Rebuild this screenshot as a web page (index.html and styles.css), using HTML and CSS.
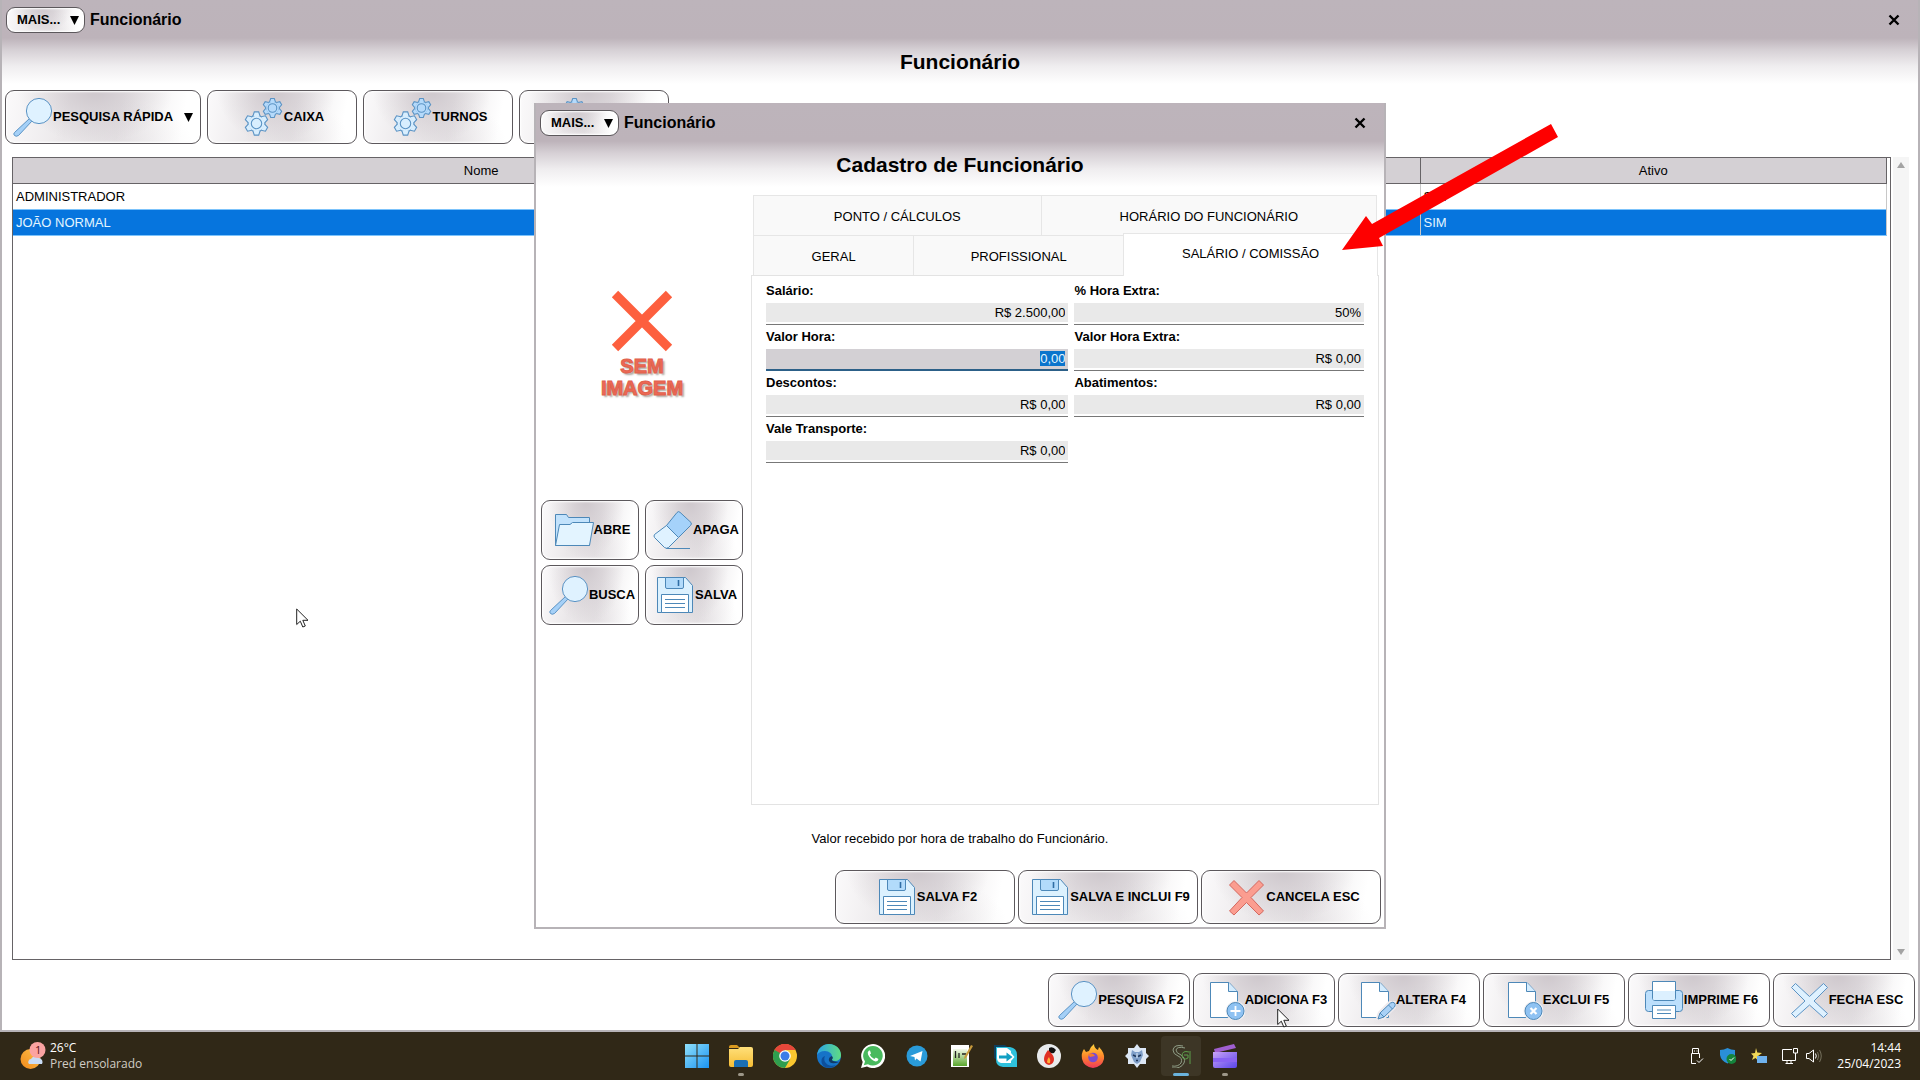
FILE: index.html
```html
<!DOCTYPE html>
<html lang="pt-BR">
<head>
<meta charset="utf-8">
<title>Funcionário</title>
<link rel="stylesheet" href="styles.css">
</head>
<body>
<svg class="sprite" aria-hidden="true">
  <defs>
    <linearGradient id="g-win" x1="0" y1="0" x2="1" y2="1"><stop offset="0" stop-color="#8fe0fb"/><stop offset="1" stop-color="#1b93f0"/></linearGradient>
    <linearGradient id="g-folder" x1="0" y1="0" x2="0" y2="1"><stop offset="0" stop-color="#ffe07a"/><stop offset="1" stop-color="#f5bd35"/></linearGradient>
    <linearGradient id="g-edge" x1="0" y1="0" x2="1" y2="0"><stop offset="0" stop-color="#2ba4e6"/><stop offset="1" stop-color="#5fdc82"/></linearGradient>
    <linearGradient id="g-fox" x1="0" y1="0" x2="0" y2="1"><stop offset="0" stop-color="#ffd43c"/><stop offset="0.5" stop-color="#ff8a2a"/><stop offset="1" stop-color="#f0385a"/></linearGradient>
    <linearGradient id="g-note" x1="0" y1="0" x2="0" y2="1"><stop offset="0" stop-color="#f4f9ea"/><stop offset="1" stop-color="#5aa62c"/></linearGradient>
    <linearGradient id="g-clip" x1="0" y1="0" x2="1" y2="1"><stop offset="0" stop-color="#c9a2f5"/><stop offset="1" stop-color="#5a45ec"/></linearGradient>
    <linearGradient id="g-sun" x1="1" y1="0" x2="0" y2="1"><stop offset="0" stop-color="#ffc24a"/><stop offset="1" stop-color="#f08a1c"/></linearGradient>
    <g id="tooth"><path d="M-3.6-7.4L-2.2-11.6H2.2L3.6-7.4"/></g>
    <g id="gear">
      <circle r="8.4"/>
      <use href="#tooth"/><use href="#tooth" transform="rotate(60)"/><use href="#tooth" transform="rotate(120)"/>
      <use href="#tooth" transform="rotate(180)"/><use href="#tooth" transform="rotate(240)"/><use href="#tooth" transform="rotate(300)"/>
      <circle r="5.2"/>
    </g>
  </defs>
  <symbol id="i-search" viewBox="0 0 40 40">
    <path d="M16.5 21.5L19 24 5.5 38.5Q3 40 1.5 38.500T1.5 35.500Z" fill="#a5d0f7" stroke="#5b93c4"/>
    <circle cx="26" cy="14" r="12.600" fill="#dff2ff" stroke="#5b93c4"/>
  </symbol>
  <symbol id="i-gears" viewBox="0 0 40 40">
    <g fill="#d8eefe" stroke="#5b93c4" stroke-width="1.100"><use href="#gear" transform="translate(12.500 26.500)"/></g>
    <g fill="#b5dafb" stroke="#5b93c4" stroke-width="1.300"><use href="#gear" transform="translate(28.500 11) scale(.82)"/></g>
  </symbol>
  <symbol id="i-folder" viewBox="0 0 40 40">
    <path d="M1.500 35.500V4.500H12.500L14.500 7.500H35.500V35.500Z" fill="#c2e2fc" stroke="#4d88b8"/>
    <path d="M1.500 35.500L5.500 14.500H16L18.500 12.500H39.500L35.500 35.500Z" fill="#e3f4ff" stroke="#4d88b8"/>
  </symbol>
  <symbol id="i-eraser" viewBox="0 0 40 40">
    <path d="M13 38.500H37" stroke="#4d88b8" fill="none"/>
    <path d="M13.500 15.500L24 2.500Q25.500 .8 27 2.300L38 12.500Q39 14 37.500 15.500L25.500 27.500Z" fill="#a5d2fa" stroke="#4d88b8"/>
    <path d="M13.500 15.500L25.500 27.500 15.500 37.500Q13.500 39 11.500 37.500L1.500 27.500Q.5 26 1.500 24.500Z" fill="#dff2ff" stroke="#4d88b8"/>
  </symbol>
  <symbol id="i-floppy" viewBox="0 0 40 40">
    <path d="M2.500 2.500H30.500L37.500 10.500V37.500H2.500Z" fill="#dcf1fe" stroke="#4d88b8"/>
    <path d="M10.500 2.500V12Q10.500 13.500 12 13.500H27Q28.500 13.500 28.500 12V2.500Z" fill="#b2dbfb" stroke="#4d88b8"/>
    <path d="M23.500 5V11" stroke="#2f6ea5" stroke-width="1.600"/>
    <path d="M6.500 37.500V19.500H33.500V37.500Z" fill="#fff" stroke="#4d88b8"/>
    <path d="M10 24.500H30M10 28.500H30M10 32.500H30" stroke="#4d88b8"/>
  </symbol>
  <symbol id="i-add" viewBox="0 0 40 40">
    <path d="M5.500 2.500H24L32.500 11.500V37.500H5.500Z" fill="#fff" stroke="#4d88b8"/><path d="M23.500 2.500V11.500H32.500" fill="#d5ecfd" stroke="#4d88b8"/>
    <circle cx="30.500" cy="31" r="10" fill="#f3f1f3"/><circle cx="30.500" cy="31" r="8.500" fill="#8fc2f2" stroke="#4d88b8"/>
    <path d="M30.500 26V36M25.500 31H35.500" stroke="#fff" stroke-width="1.800"/>
  </symbol>
  <symbol id="i-edit" viewBox="0 0 40 40">
    <path d="M5.500 2.500H24L32.500 11.500V37.500H5.500Z" fill="#fff" stroke="#4d88b8"/><path d="M23.500 2.500V11.500H32.500" fill="#d5ecfd" stroke="#4d88b8"/>
    <path d="M19 41L22 32 33 21H41V27L28 40Z" fill="#edeaed"/>
    <path d="M22 39L24 33 34.500 23Q37 21.500 38.500 23T38.500 27L28 37Z" fill="#a9d1f6" stroke="#4d88b8"/><path d="M32.500 25L36.500 29M24 33L28 37" stroke="#4d88b8"/>
  </symbol>
  <symbol id="i-delete" viewBox="0 0 40 40">
    <path d="M5.500 2.500H24L32.500 11.500V37.500H5.500Z" fill="#fff" stroke="#4d88b8"/><path d="M23.500 2.500V11.500H32.500" fill="#d5ecfd" stroke="#4d88b8"/>
    <circle cx="30.500" cy="31" r="10" fill="#f3f1f3"/><circle cx="30.500" cy="31" r="8.500" fill="#8fc2f2" stroke="#4d88b8"/>
    <path d="M27.500 28L33.500 34M33.500 28L27.500 34" stroke="#fff" stroke-width="2.200"/>
  </symbol>
  <symbol id="i-print" viewBox="0 0 40 40">
    <rect x="1.500" y="10.500" width="37" height="21" rx="3" fill="#bcdffc" stroke="#4d88b8"/>
    <path d="M8.500 1.500H31.500V18Q31.500 20.500 29 20.500H11Q8.500 20.500 8.500 18Z" fill="#fff" stroke="#4d88b8"/>
    <path d="M9 11H31V18.500Q31 20 29.500 20H10.500Q9 20 9 18.500Z" fill="#dcf0ff"/>
    <path d="M8.500 25.500H31.500V38.500H8.500Z" fill="#fff" stroke="#4d88b8"/><path d="M13 30H27M13 33.500H27" stroke="#4d88b8"/>
  </symbol>
  <symbol id="i-close" viewBox="0 0 40 40">
    <path d="M6.500 3.500L20.500 16.500 34.500 3.500 38.500 7.500 25 21 38.500 33.500 34.500 37.500 20.500 25 6.500 37.500 2.500 33.500 16 21 2.500 7.500Z" fill="#def1ff" stroke="#5b93c4" stroke-linejoin="round"/>
  </symbol>
  <symbol id="i-cancel" viewBox="0 0 40 40">
    <path d="M8 3.500L20.500 16 33 3.500 37.500 8 25 20.500 37.500 34 33 38 20.500 25.500 8 38 3.500 34 16 20.500 3.500 8Z" fill="#fb9d90" stroke="#d4685f" stroke-linejoin="round"/>
  </symbol>
  <symbol id="i-caret" viewBox="0 0 9 9"><path d="M0 0H9L4.500 9Z" fill="#000"/></symbol>
  <symbol id="i-x" viewBox="0 0 12 12"><path d="M1.500 1.500L10.500 10.500M10.500 1.500L1.500 10.500" stroke="#000" stroke-width="2.400"/></symbol>
  <symbol id="i-pointer" viewBox="0 0 13 20"><path d="M.7 1V16.500L4.300 13.200 6.800 19 9.300 18 6.800 12.300H12Z" fill="#fff" stroke="#222"/></symbol>
</svg>

<main class="desktop">
  <section class="window main-window">
    <header class="titlebar">
      <button class="btn more" type="button">MAIS...<svg class="caret"><use href="#i-caret"/></svg></button>
      <span class="caption">Funcionário</span>
      <button class="close" type="button" aria-label="Fechar"><svg><use href="#i-x"/></svg></button>
    </header>
    <h1 class="heading">Funcionário</h1>
    <div class="toolbar">
      <button class="btn quick" type="button"><svg class="icon"><use href="#i-search"/></svg>PESQUISA RÁPIDA<svg class="caret"><use href="#i-caret"/></svg></button>
      <button class="btn" type="button"><svg class="icon"><use href="#i-gears"/></svg>CAIXA</button>
      <button class="btn" type="button"><svg class="icon"><use href="#i-gears"/></svg>TURNOS</button>
      <button class="btn options" type="button" aria-label="Opções"><svg class="icon"><use href="#i-gears"/></svg></button>
    </div>
    <div class="list">
      <div class="list-body">
        <table>
          <thead><tr><th class="col-name">Nome</th><th></th><th class="col-active">Ativo</th></tr></thead>
          <tbody>
            <tr><td>ADMINISTRADOR</td><td></td><td>SIM</td></tr>
            <tr class="selected"><td>JOÃO NORMAL</td><td></td><td>SIM</td></tr>
          </tbody>
        </table>
      </div>
      <div class="scrollbar"><span class="up"></span><span class="down"></span></div>
    </div>
    <footer class="actions">
      <button class="btn" type="button"><svg class="icon"><use href="#i-search"/></svg>PESQUISA F2</button>
      <button class="btn" type="button"><svg class="icon"><use href="#i-add"/></svg>ADICIONA F3</button>
      <button class="btn" type="button"><svg class="icon"><use href="#i-edit"/></svg>ALTERA F4</button>
      <button class="btn" type="button"><svg class="icon"><use href="#i-delete"/></svg>EXCLUI F5</button>
      <button class="btn" type="button"><svg class="icon"><use href="#i-print"/></svg>IMPRIME F6</button>
      <button class="btn" type="button"><svg class="icon"><use href="#i-close"/></svg>FECHA ESC</button>
    </footer>
  </section>

  <div class="overlay">
    <section class="window dialog" role="dialog" aria-labelledby="dialog-title">
      <header class="titlebar">
        <button class="btn more" type="button">MAIS...<svg class="caret"><use href="#i-caret"/></svg></button>
        <span class="caption">Funcionário</span>
        <button class="close" type="button" aria-label="Fechar"><svg><use href="#i-x"/></svg></button>
      </header>
      <h2 class="heading" id="dialog-title">Cadastro de Funcionário</h2>
      <div class="dialog-body">
        <aside class="side">
          <div class="photo">
            <svg viewBox="0 0 62 62"><path d="M4 4L58 58M58 4L4 58" stroke="#fd5f3e" stroke-width="9"/></svg>
            <span>SEM<br>IMAGEM</span>
          </div>
          <div class="photo-buttons">
            <button class="btn" type="button"><svg class="icon"><use href="#i-folder"/></svg>ABRE</button>
            <button class="btn" type="button"><svg class="icon"><use href="#i-eraser"/></svg>APAGA</button>
            <button class="btn" type="button"><svg class="icon"><use href="#i-search"/></svg>BUSCA</button>
            <button class="btn" type="button"><svg class="icon"><use href="#i-floppy"/></svg>SALVA</button>
          </div>
        </aside>
        <div class="panel">
          <div class="tabs" role="tablist">
            <div class="tab-row">
              <button class="tab w-ponto" type="button" role="tab">PONTO / CÁLCULOS</button>
              <button class="tab w-horario" type="button" role="tab">HORÁRIO DO FUNCIONÁRIO</button>
            </div>
            <div class="tab-row">
              <button class="tab w-geral" type="button" role="tab">GERAL</button>
              <button class="tab w-prof" type="button" role="tab">PROFISSIONAL</button>
              <button class="tab w-salario active" type="button" role="tab" aria-selected="true">SALÁRIO / COMISSÃO</button>
            </div>
          </div>
          <form class="page">
            <div class="field"><label for="salario">Salário:</label><input id="salario" type="text" value="R$ 2.500,00"></div>
            <div class="field"><label for="hora-extra">% Hora Extra:</label><input id="hora-extra" type="text" value="50%"></div>
            <div class="field"><label for="valor-hora">Valor Hora:</label><input id="valor-hora" type="text" value="0,00"></div>
            <div class="field"><label for="valor-extra">Valor Hora Extra:</label><input id="valor-extra" type="text" value="R$ 0,00"></div>
            <div class="field"><label for="descontos">Descontos:</label><input id="descontos" type="text" value="R$ 0,00"></div>
            <div class="field"><label for="abatimentos">Abatimentos:</label><input id="abatimentos" type="text" value="R$ 0,00"></div>
            <div class="field"><label for="vale">Vale Transporte:</label><input id="vale" type="text" value="R$ 0,00"></div>
          </form>
        </div>
      </div>
      <p class="hint">Valor recebido por hora de trabalho do Funcionário.</p>
      <footer class="actions dialog-actions">
        <button class="btn" type="button"><svg class="icon"><use href="#i-floppy"/></svg>SALVA F2</button>
        <button class="btn" type="button"><svg class="icon"><use href="#i-floppy"/></svg>SALVA E INCLUI F9</button>
        <button class="btn" type="button"><svg class="icon"><use href="#i-cancel"/></svg>CANCELA ESC</button>
      </footer>
      <svg class="arrow" viewBox="0 0 216 126"><path d="M209 0L216 13 37 114 41 122 0 126 24 92 30 100Z" fill="#fe0000"/></svg>
    </section>
  </div>
  <svg class="pointer pointer-list"><use href="#i-pointer"/></svg>
  <svg class="pointer pointer-add"><use href="#i-pointer"/></svg>
</main>

<footer class="taskbar">
  <div class="weather">
    <svg viewBox="0 0 26 28"><circle cx="10.500" cy="17" r="10" fill="url(#g-sun)"/><path d="M9 22a3 3 0 0 1 2-5 5 5 0 0 1 8-1 4 4 0 0 1 3 6Z" fill="#c9dcf5"/><circle cx="17.500" cy="8" r="8" fill="#fba3a1"/><text x="15" y="12" font-size="11" fill="#5b1010">1</text></svg>
    <div><div>26°C</div><div class="dim">Pred ensolarado</div></div>
  </div>
  <nav class="apps">
    <span class="app"><svg viewBox="0 0 24 24"><path d="M0 0H11.500V11.500H0ZM12.500 0H24V11.500H12.500ZM0 12.500H11.500V24H0ZM12.500 12.500H24V24H12.500Z" fill="url(#g-win)"/></svg></span>
    <span class="app running"><svg viewBox="0 0 24 24"><path d="M0 3Q0 1 2 1H8L11 4H0Z" fill="#d99a20"/><path d="M0 5H9L11 3H22Q24 3 24 5V21Q24 23 22 23H2Q0 23 0 21Z" fill="url(#g-folder)"/><path d="M5 23V18Q5 16 7 16H17Q19 16 19 18V23Z" fill="#1a6fb5"/></svg></span>
    <span class="app"><svg viewBox="0 0 24 24"><circle cx="12" cy="12" r="12" fill="#fbc72f"/><path d="M12 12L1.600 6A12 12 0 0 1 22.400 6H12Z" fill="#e5473a"/><path d="M1.600 6A12 12 0 0 0 12 24L17.200 15 12 12Z" fill="#2f9e4f"/><path d="M1.600 6L6.800 15 12 12 12 6Z" fill="#2f9e4f"/><path d="M1.600 6A12 12 0 0 1 22.400 6H12L7 9Z" fill="#e5473a"/><circle cx="12" cy="12" r="5.800" fill="#fff"/><circle cx="12" cy="12" r="4.500" fill="#3b7de8"/></svg></span>
    <span class="app"><svg viewBox="0 0 24 24"><circle cx="12" cy="12" r="12" fill="#1673c8"/><path d="M0 11C1 4 6 0 12 0 19 0 24 5 24 11 24 15 21 17 18 17 15 17 14 16 15 14 16 10 12 7 8 7 4 7 1 9 0 11Z" fill="url(#g-edge)"/><path d="M8 12C5 18 12 24 19 21 16 24 11 24.500 7 22.500 3 19 4 13 8 12Z" fill="#0d4f9c"/><path d="M15 12a4 4 0 0 0-3 5q2 4 10 1-3 0-6-1-2-1 0-3z" fill="#103a66"/></svg></span>
    <span class="app"><svg viewBox="0 0 24 24"><path d="M0 24L1.700 18A12 12 0 1 1 6 22.400Z" fill="#fff"/><path d="M2.800 21.200L4 17.500A9.800 9.800 0 1 1 7 20.200Z" fill="#49ba5e"/><path d="M8 6.500Q6 8 7 10.500 9.500 16 14.500 17.500 17 17.500 17.500 15L14.800 13.500 13.300 15Q10 13.500 8.800 10.800L10 9.500 9 6.500Z" fill="#fff"/></svg></span>
    <span class="app"><svg viewBox="0 0 24 24"><circle cx="12" cy="12" r="10.500" fill="#2a9bd9"/><path d="M5 12L17.500 7 15.500 17.500 11.500 14.500 10 16.500 9.500 13Z" fill="#fff"/></svg></span>
    <span class="app"><svg viewBox="0 0 24 24"><path d="M2 1H20V23H2Z" fill="#fff"/><path d="M4 5H18V22H4Z" fill="url(#g-note)"/><path d="M6.500 7V14M10 9V14M13 10H17" stroke="#222" stroke-width="1.300"/><path d="M22 1L24 2 17 14 15 15 15.500 12.500Z" fill="#c79a3c"/></svg></span>
    <span class="app"><svg viewBox="0 0 24 24"><path d="M1 1H12L16 4H6V18L1 14Z" fill="#0e3f5c"/><path d="M3 3H17Q24 4 24 11V23H10Q3 22 3 16Z" fill="#2fc2dd"/><path d="M4 4H14L18 7V9L21.500 13 18 17V19H8Q4 18 4 14Z" fill="#fff"/><path d="M6 11.500H13.500V8.500L19.500 13 13.500 17.500V14.500H6Z" fill="#12a0c4"/></svg></span>
    <span class="app"><svg viewBox="0 0 24 24"><circle cx="12" cy="12" r="12" fill="#e8eaec"/><path d="M12 4Q16 2 19 6L17 9Q14 10 12 8Z" fill="#111"/><path d="M11 6Q17 11 17 15 17 20 12 21 7 20 7 15 7 11 11 6Z" fill="#e03024"/><path d="M12 13Q14 16 13 19 11 20 10 18 10 15 12 13Z" fill="#ffb03a"/></svg></span>
    <span class="app"><svg viewBox="0 0 24 24"><path d="M3 5L5 8 8 7Q9 3 13 0 13 4 17 6L18 3Q24 9 23 15 21 23 12 24 3 23 1 15 0 9 3 5Z" fill="url(#g-fox)"/><circle cx="12" cy="13.500" r="4.800" fill="#7a4bd0"/><path d="M7 10Q12 8 14 12L9 13Z" fill="#f67a2c"/></svg></span>
    <span class="app"><svg viewBox="0 0 24 24"><path d="M12 0L15 4 21 4 21 9 24 12 21 15 21 20 15 20 12 24 9 20 3 20 3 15 0 12 3 9 3 4 9 4Z" fill="#dce7f5"/><path d="M7 6L10 8H14L17 6 18 11 15 18 12 20 9 18 6 11Z" fill="#7f9fc9"/><path d="M8 11L11 12.500M16 11L13 12.500M11 16.500H13" stroke="#20385c" stroke-width="1.600"/><path d="M12 9V14" stroke="#dce7f5"/></svg></span>
    <span class="app current"><svg viewBox="0 0 24 24" fill="none" stroke="#8f9d86"><path d="M14 2Q5 0 4 6 4 10 9 12 14 14 12 19 9 23 3 22"/><path d="M16 4Q8 2 7 6 7 9 12 11 17 14 15 19 12 25 3 24" /><path d="M20 8Q13 6 13 12 14 17 19 14V11H15M21 7V20" stroke="#5d9d4a"/></svg></span>
    <span class="app running"><svg viewBox="0 0 24 24"><path d="M1 5L21 0 23 4 2 9Z" fill="#a05fd0"/><path d="M0 8H24V22Q24 24 22 24H2Q0 24 0 22Z" fill="url(#g-clip)"/><path d="M0 14H24V18H0Z" fill="#8a63f3"/></svg></span>
  </nav>
  <div class="tray">
    <svg viewBox="0 0 16 16" fill="none" stroke="#fff"><path d="M3.500 5V.500H9.500V5M2.500 5.500H10.500V10M2.500 5.500V15.500H7M5 3H6M7.500 3H8.500M8 12.500L10 14.500 14 10.500"/></svg>
    <svg viewBox="0 0 16 16"><path d="M7.500 0Q11 2 15 2V7Q14 13 7.500 15.500 1 13 0 7V2Q4 2 7.500 0Z" fill="#2a8fd8"/><circle cx="11.500" cy="11" r="5" fill="#14843c"/><path d="M9.500 11L11 12.500 14 9.500" stroke="#fff" fill="none"/></svg>
    <svg viewBox="0 0 16 16"><path d="M5 0L6.300 4.500 11 5 7 8 7.500 13 4.500 10 1 12 2.500 8 0 5.500 4 5Z" fill="#f0d858"/><rect x="6" y="8" width="10" height="7" fill="#6fb2ee"/></svg>
    <svg viewBox="0 0 16 16" fill="none" stroke="#fff"><path d="M10 1.500H.500V12.500H13.500V8M5 12.500V15.500M9 12.500V15.500M3.500 15.500H11M11.500 .500H15.500V5H11.500ZM13.500 5V8"/></svg>
    <svg viewBox="0 0 16 16" fill="none" stroke="#fff"><path d="M.500 5.500H3L7.500 2V14L3 10.500H.500ZM9.500 5.500Q11 8 9.500 10.500"/><path d="M11.500 4Q14 8 11.500 12M13.500 2Q17 8 13.500 14" stroke="#77725f"/></svg>
    <div class="clock"><div>14:44</div><div>25/04/2023</div></div>
  </div>
</footer>
<script src="app.js"></script>
</body>
</html>
```
FILE: app.js
```js
// Opens the form with the hourly rate ready to be overwritten.
const rate = document.getElementById('valor-hora');
rate.focus();
rate.select();
```
FILE: styles.css
```css
* { box-sizing: border-box; }

body {
  margin: 0;
  min-height: 100vh;
  display: flex;
  flex-direction: column;
  font: 13px/16px "Liberation Sans", Arial, sans-serif;
  color: #000;
  background: #fff;
}

button, input {
  font: inherit;
  color: inherit;
  margin: 0;
}

.sprite { position: absolute; width: 0; height: 0; }

.desktop {
  flex: 1;
  display: flex;
  position: relative;
}

/* Windows */
.window {
  display: flex;
  flex-direction: column;
  border: 2px solid #b7b3b7;
  border-top: 0;
  background: linear-gradient(#bdb4bb 0, #bdb3ba 38px, #d6d0d5 50px, #efedef 66px, #fff 84px);
}

.main-window { flex: 1; padding-bottom: 3px; }

.titlebar {
  height: 38px;
  padding: 7px 12px 5px 4px;
  display: flex;
  align-items: center;
}

.caption {
  flex: 1;
  padding-left: 5px;
  font-size: 16px;
  font-weight: bold;
}

.close {
  width: 24px;
  height: 24px;
  padding: 6px;
  border: 0;
  background: none;
}

.close svg { display: block; width: 12px; height: 12px; }

.heading {
  margin: 0;
  font-size: 21px;
  line-height: 48px;
  text-align: center;
}

/* Buttons */
.btn {
  display: flex;
  align-items: center;
  justify-content: center;
  padding: 0 0 0 4px;
  border: 1px solid #5c585c;
  border-radius: 9px;
  font-weight: bold;
  white-space: nowrap;
  background:
    radial-gradient(ellipse 40% 100% at 46% 0, rgba(176, 166, 174, .5), rgba(176, 166, 174, 0)),
    radial-gradient(ellipse 36% 80% at 60% 100%, rgba(190, 182, 188, .2), rgba(190, 182, 188, 0)),
    linear-gradient(100deg, #fbfafb, #ebe8ea 32%, #ebe8ea 58%, #fff 90%);
  box-shadow: inset 0 0 2px 1px #fff;
}

.icon { width: 40px; height: 40px; flex: none; }
.caret { width: 9px; height: 9px; flex: none; }

.more {
  width: 79px;
  height: 26px;
  justify-content: space-between;
  padding: 0 5px 0 10px;
}

.toolbar {
  display: flex;
  gap: 6px;
  margin: 4px 3px 0;
}

.toolbar .btn { width: 150px; height: 54px; }
.toolbar .quick { width: 196px; justify-content: flex-start; padding: 0 7px; }
.toolbar .options { padding-right: 60px; }
.quick .caret { margin-left: auto; }

.actions {
  display: flex;
  justify-content: flex-end;
  gap: 3px;
  padding: 0 3px;
}

.actions .btn { width: 142px; height: 54px; }

/* Employee list */
.list {
  flex: 1;
  display: flex;
  gap: 2px;
  margin: 13px 9px 13px 10px;
}

.list-body {
  flex: 1;
  padding-right: 3px;
  border: 1px solid #666366;
}

.list table {
  width: 100%;
  border-collapse: collapse;
  table-layout: fixed;
}

.col-name { width: 50%; }
.col-active { width: 24.9%; }

.list th {
  height: 25px;
  padding: 1px 0 0;
  font-weight: normal;
  background: #d4d0d4;
  border-right: 1px solid #666366;
  border-bottom: 1px solid #666366;
}

.list td {
  height: 26px;
  padding: 2px 3px 0;
  border-right: 1px solid #c8c8c8;
}

.list .selected td {
  color: #e4f6ff;
  background: #0675de;
  border-top: 1px solid #7cc3fb;
  border-bottom: 1px solid #7cc3fb;
}

.scrollbar {
  width: 16px;
  padding: 5px 4px;
  display: flex;
  flex-direction: column;
  justify-content: space-between;
  background: #f5f5f5;
}

.scrollbar span {
  border: 4px solid transparent;
}

.scrollbar .up { border-top: 0; border-bottom: 6px solid #a3a3a3; }
.scrollbar .down { border-bottom: 0; border-top: 6px solid #a3a3a3; }

/* Dialog */
.overlay {
  position: absolute;
  inset: 0;
  display: flex;
  align-items: center;
  justify-content: center;
}

.dialog {
  position: relative;
  width: 852px;
  padding-bottom: 3px;
}

.dialog-body {
  display: flex;
  gap: 8px;
  padding: 6px 5px 0;
}

.side {
  width: 202px;
  display: flex;
  flex-direction: column;
  gap: 8px;
}

.photo {
  height: 297px;
  padding-top: 2px;
  display: flex;
  flex-direction: column;
  align-items: center;
  justify-content: center;
  font-size: 20px;
  line-height: 22px;
  font-weight: bold;
  text-align: center;
  color: #ee6a55;
  -webkit-text-stroke: 1px #e0604c;
  text-shadow: 2px 2px 2px #a9a39b;
}

.photo svg { width: 62px; height: 62px; margin-bottom: 3px; }

.photo-buttons {
  display: grid;
  grid-template-columns: 1fr 1fr;
  gap: 5px 6px;
}

.photo-buttons .btn { height: 60px; }

.panel {
  flex: 1;
  display: flex;
  flex-direction: column;
}

.tabs { padding: 0 2px; }
.tab-row { display: flex; height: 40px; }

.tab {
  flex-basis: 0;
  padding: 2px 0 0;
  border: solid #e6e6e6;
  border-width: 1px 0 0 1px;
  background: #f9f9f9;
}

.tab:last-child { border-right-width: 1px; }
.tab.active {
  position: relative;
  margin: -2px -1px -1px 0;
  padding-bottom: 4px;
  background: #fff;
}

.w-ponto { flex-grow: 288; }
.w-horario { flex-grow: 336; }
.w-geral { flex-grow: 160; }
.w-prof { flex-grow: 210; }
.w-salario { flex-grow: 254; }

.page {
  flex: 1;
  min-height: 530px;
  display: grid;
  grid-template-columns: 303fr 290fr;
  align-content: start;
  gap: 2px 6px;
  padding: 5px 14px;
  border: 1px solid #e3e3e3;
}

.field { display: flex; flex-direction: column; }
.field label { font-weight: bold; line-height: 20px; }

.field input {
  width: 100%;
  height: 24px;
  padding: 0 3px;
  border: 0;
  border-bottom: 1px solid #777;
  outline: 0;
  border-radius: 0;
  text-align: right;
  background: linear-gradient(#fff 2px, #e9e9e9 2px, #e9e9e9 21px, #fff 21px);
}

.field input:focus {
  border-bottom: 2px solid #2c6088;
  background: linear-gradient(#fff 2px, #d3d0d4 2px);
}

.field input::selection { color: #e4f6ff; background: #0a74cc; }

.hint {
  margin: 0;
  padding-top: 3px;
  line-height: 62px;
  text-align: center;
}

.dialog-actions .btn { width: 180px; }

/* Marks lying over the windows */
.arrow {
  position: absolute;
  left: 806px;
  top: 21px;
  width: 216px;
  height: 126px;
}

.pointer { position: absolute; width: 13px; height: 20px; }
.pointer-list { left: 296px; top: 608px; }
.pointer-add { left: 1277px; top: 1008px; }

/* Taskbar */
.taskbar {
  height: 48px;
  display: grid;
  grid-template-columns: 1fr auto 1fr;
  align-items: center;
  padding: 0 19px 0 20px;
  font: 12px/16px "Open Sans", "Noto Sans", sans-serif;
  color: #fff;
  background: #302817;
}

.weather { display: flex; gap: 4px; align-items: center; }
.weather svg { width: 26px; height: 28px; }
.dim { color: #d0ccc4; }

.apps { display: flex; gap: 4px; }

.app {
  position: relative;
  width: 40px;
  height: 40px;
  padding: 8px;
  border-radius: 4px;
}

.app svg { display: block; width: 24px; height: 24px; }
.current { background: #3d3626; }

.running::after, .current::after {
  content: "";
  position: absolute;
  bottom: 0;
  left: 17px;
  width: 6px;
  height: 3px;
  border-radius: 2px;
  background: #9d9788;
}

.current::after { left: 12px; width: 16px; background: #6ab3dd; }

.tray {
  display: flex;
  justify-content: flex-end;
  align-items: center;
  gap: 15px;
}

.tray svg { width: 16px; height: 16px; }
.tray svg:nth-of-type(5) { margin-left: -7px; }
.clock { text-align: right; }
```
